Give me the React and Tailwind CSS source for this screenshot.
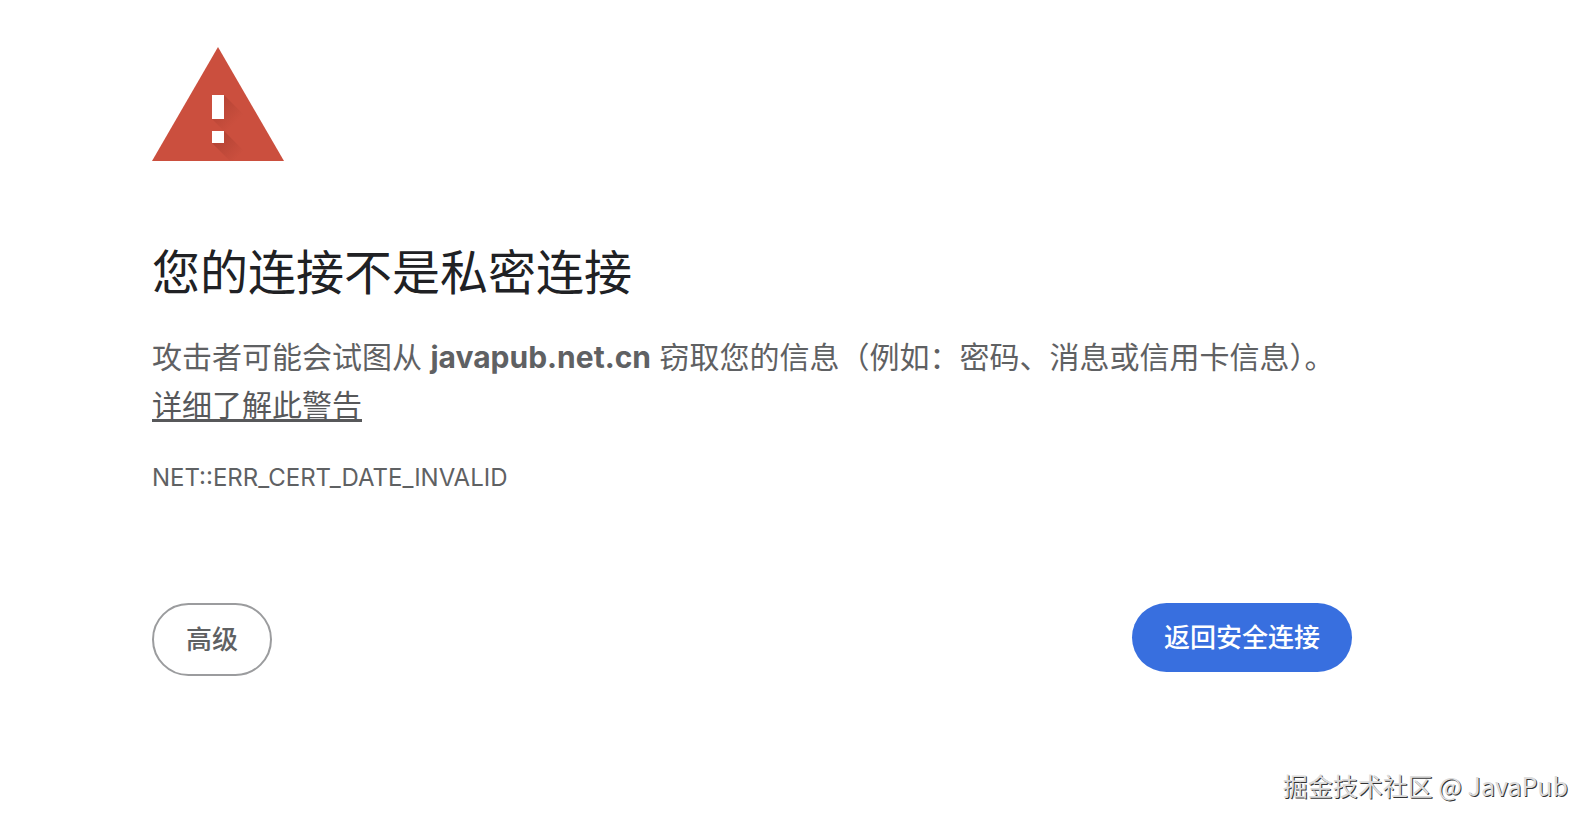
function WarningIcon() {
  return (
    <svg width="132" height="114" viewBox="0 0 132 114" aria-hidden="true">
      <defs>
        <linearGradient id="shade" x1="62" y1="58" x2="90" y2="86" gradientUnits="userSpaceOnUse">
          <stop offset="0" stopColor="#a63d2f" stopOpacity="0.6" />
          <stop offset="0.7" stopColor="#a63d2f" stopOpacity="0" />
        </linearGradient>
        <linearGradient id="shadeLow" x1="62" y1="90" x2="84" y2="112" gradientUnits="userSpaceOnUse">
          <stop offset="0" stopColor="#a63d2f" stopOpacity="0.7" />
          <stop offset="1" stopColor="#a63d2f" stopOpacity="0" />
        </linearGradient>
      </defs>
      <path d="M66 0L132 114H0Z" fill="#cb4f3e" />
      <path d="M72 48L98 74L86 98L60 72Z" fill="url(#shade)" />
      <path d="M72 84L102 114H78L60 96Z" fill="url(#shadeLow)" />
      <path d="M60 48H72V72H60ZM60 84H72V96H60Z" fill="#fff" />
    </svg>
  );
}

export default function App() {
  return (
    <div
      lang="zh-CN"
      className="flex min-h-screen flex-col bg-white font-[Inter,'Noto_Sans_CJK_SC',sans-serif] text-[#5f6163]"
    >
      <main className="w-full max-w-[1440px] pt-[47px] pr-[88px] pl-[152px]">
        <WarningIcon />

        <h1 className="mt-[83px] text-5xl leading-[58px] text-[#202124]">您的连接不是私密连接</h1>

        <p className="mt-[31px] text-3xl leading-[48px]">
          攻击者可能会试图从 <strong className="font-bold">javapub.net.cn</strong>{' '}
          窃取您的信息（例如：密码、消息或信用卡信息）。
          <br />
          <a href="#learn-more" className="text-[#57585a] underline decoration-3 underline-offset-3">
            详细了解此警告
          </a>
        </p>

        <div className="mt-[25px] text-2xl leading-[48px]">NET::ERR_CERT_DATE_INVALID</div>

        <div className="mt-[101px] flex items-start justify-between text-[26px] leading-[37px] font-medium">
          <button
            type="button"
            className="rounded-full border-2 border-[#9b9c9e] px-8 py-4 hover:bg-gray-50"
          >
            高级
          </button>
          <button
            type="button"
            className="rounded-full bg-[#386fdf] px-8 py-4 text-white hover:bg-blue-700"
          >
            返回安全连接
          </button>
        </div>
      </main>

      <footer className="mt-auto pr-6 pb-[18px] text-right font-['Noto_Sans_CJK_SC',sans-serif] text-[25px] leading-[37px] text-[#dcdcdc] [text-shadow:1px_1px_0_#333]">
        掘金技术社区 @ JavaPub
      </footer>
    </div>
  );
}
